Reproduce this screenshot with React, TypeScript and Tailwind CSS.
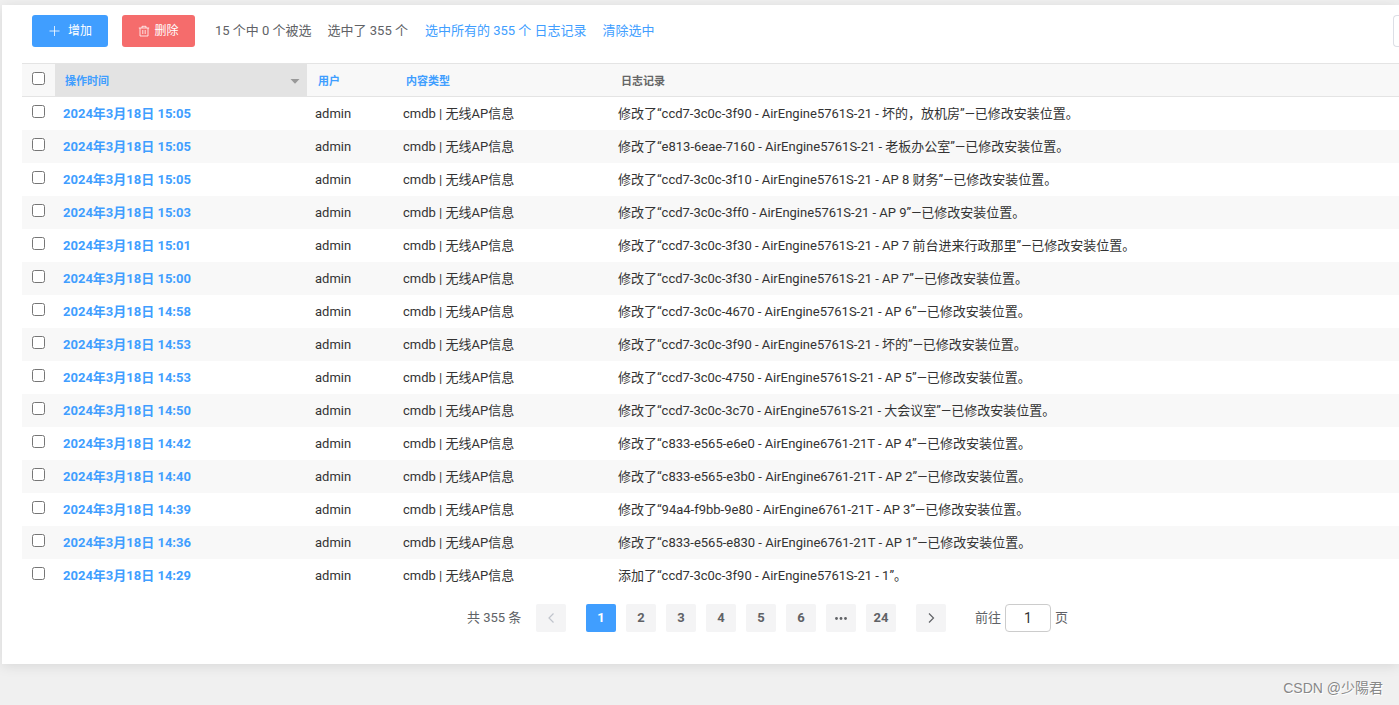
import React from "react";

type LogRow = { time: string; message: string };

const rows: LogRow[] = [
  { time: "15:05", message: "修改了“ccd7-3c0c-3f90 - AirEngine5761S-21 - 坏的，放机房”—已修改安装位置。" },
  { time: "15:05", message: "修改了“e813-6eae-7160 - AirEngine5761S-21 - 老板办公室”—已修改安装位置。" },
  { time: "15:05", message: "修改了“ccd7-3c0c-3f10 - AirEngine5761S-21 - AP 8 财务”—已修改安装位置。" },
  { time: "15:03", message: "修改了“ccd7-3c0c-3ff0 - AirEngine5761S-21 - AP 9”—已修改安装位置。" },
  { time: "15:01", message: "修改了“ccd7-3c0c-3f30 - AirEngine5761S-21 - AP 7 前台进来行政那里”—已修改安装位置。" },
  { time: "15:00", message: "修改了“ccd7-3c0c-3f30 - AirEngine5761S-21 - AP 7”—已修改安装位置。" },
  { time: "14:58", message: "修改了“ccd7-3c0c-4670 - AirEngine5761S-21 - AP 6”—已修改安装位置。" },
  { time: "14:53", message: "修改了“ccd7-3c0c-3f90 - AirEngine5761S-21 - 坏的”—已修改安装位置。" },
  { time: "14:53", message: "修改了“ccd7-3c0c-4750 - AirEngine5761S-21 - AP 5”—已修改安装位置。" },
  { time: "14:50", message: "修改了“ccd7-3c0c-3c70 - AirEngine5761S-21 - 大会议室”—已修改安装位置。" },
  { time: "14:42", message: "修改了“c833-e565-e6e0 - AirEngine6761-21T - AP 4”—已修改安装位置。" },
  { time: "14:40", message: "修改了“c833-e565-e3b0 - AirEngine6761-21T - AP 2”—已修改安装位置。" },
  { time: "14:39", message: "修改了“94a4-f9bb-9e80 - AirEngine6761-21T - AP 3”—已修改安装位置。" },
  { time: "14:36", message: "修改了“c833-e565-e830 - AirEngine6761-21T - AP 1”—已修改安装位置。" },
  { time: "14:29", message: "添加了“ccd7-3c0c-3f90 - AirEngine5761S-21 - 1”。" },
];

const pages = ["1", "2", "3", "4", "5", "6", "more", "24"];

function Toolbar() {
  return (
    <div className="flex items-center pl-[10px] text-[13px] text-[#606266]">
      <button type="button" className="flex h-8 w-[76px] items-center justify-center gap-2 rounded-[3px] bg-[#409eff] text-xs text-white">
        <svg className="size-3" viewBox="0 0 12 12" fill="none" stroke="currentColor" strokeWidth="0.8" aria-hidden="true">
          <path d="M6.500 1v10M1.500 6h10" />
        </svg>
        增加
      </button>
      <button type="button" className="ml-[14px] flex h-8 w-[73px] items-center justify-center gap-1 rounded-[3px] bg-[#f56c6c] text-xs text-white">
        <svg className="size-3" viewBox="0 0 12 12" fill="none" stroke="currentColor" strokeWidth="0.8" aria-hidden="true">
          <path d="M0.800 3h10.400M4 3V1.300h4V3M2 3v8h8V3M4.800 5v4M7.200 5v4" />
        </svg>
        删除
      </button>
      <span className="ml-5">15 个中 0 个被选</span>
      <span className="ml-4">选中了 355 个</span>
      <a href="#all" className="ml-[17px] text-[#409eff]">选中所有的 355 个 日志记录</a>
      <a href="#clear" className="ml-4 text-[#409eff]">清除选中</a>
      <input
        type="text"
        aria-label="搜索"
        className="ml-auto h-8 w-[6px] rounded-l-[4px] border border-r-0 border-[#dcdfe6] bg-white"
      />
    </div>
  );
}

function LogTable() {
  return (
    <table className="mt-4 w-full table-fixed border-separate border-spacing-0 text-left text-[13px] text-[#333]">
      <colgroup>
        <col className="w-[33px]" />
        <col className="w-[252px]" />
        <col className="w-[88px]" />
        <col className="w-[215px]" />
        <col />
      </colgroup>
      <thead>
        <tr className="h-[34px] bg-[#f8f8f8] text-[11px]">
          <th className="border-y border-[#e4e4e4] p-0 align-top">
            <input type="checkbox" aria-label="全选" className="mt-2 ml-[10px] block size-[13px]" />
          </th>
          <th className="border-y border-[#e4e4e4] bg-[#e3e3e3] px-[10px] pt-1 pb-0">
            <div className="flex items-center justify-between">
              <a href="#time" className="text-[#409eff]">操作时间</a>
              <svg className="-mr-1 h-2 w-3" viewBox="0 0 12 8" fill="#999" aria-hidden="true">
                <path d="M1.500 1h9L6 5.800z" />
              </svg>
            </div>
          </th>
          <th className="border-y border-[#e4e4e4] px-[11px] pt-1 pb-0"><a href="#user" className="text-[#409eff]">用户</a></th>
          <th className="border-y border-[#e4e4e4] px-[11px] pt-1 pb-0"><a href="#type" className="text-[#409eff]">内容类型</a></th>
          <th className="border-y border-[#e4e4e4] px-[11px] pt-1 pb-0 text-[#666]">日志记录</th>
        </tr>
      </thead>
      <tbody>
        {rows.map((row, i) => (
          <tr key={i} className="h-[33px] even:bg-[#f8f8f8]">
            <td className="p-0 align-top">
              <input type="checkbox" aria-label={row.message} className="mt-2 ml-[10px] block size-[13px]" />
            </td>
            <th className="px-2 py-0 font-bold">
              <a href={`#log-${i}`} className="text-[#409eff]">2024年3月18日 {row.time}</a>
            </th>
            <td className="px-2 py-0">admin</td>
            <td className="px-2 py-0">cmdb | 无线AP信息</td>
            <td className="px-2 py-0 whitespace-nowrap">{row.message}</td>
          </tr>
        ))}
      </tbody>
    </table>
  );
}

function Pagination() {
  return (
    <nav aria-label="分页" className="mt-3 flex h-7 items-center pl-[445px] text-[13px] text-[#606266]">
      <span className="w-[69px]">共 355 条</span>
      <button type="button" disabled aria-label="上一页" className="flex h-7 w-[30px] items-center justify-center rounded-[2px] bg-[#f4f4f5] text-[#c0c4cc]">
        <svg className="size-3" viewBox="0 0 12 12" fill="none" stroke="currentColor" strokeWidth="1.2" aria-hidden="true">
          <path d="M8.500 1.500 4 6l4.500 4.500" />
        </svg>
      </button>
      <ul className="mx-5 flex gap-[10px] font-bold">
        {pages.map((page) => (
          <li key={page}>
            <button
              type="button"
              aria-label={page === "more" ? "更多" : undefined}
              className={
                page === "1"
                  ? "flex h-7 w-[30px] items-center justify-center rounded-[2px] bg-[#409eff] text-white"
                  : "flex h-7 w-[30px] items-center justify-center rounded-[2px] bg-[#f4f4f5]"
              }
            >
              {page === "more" ? (
                <svg className="size-3" viewBox="0 0 12 12" fill="currentColor" aria-hidden="true">
                  <circle cx="1.500" cy="6.500" r="1.400" />
                  <circle cx="6" cy="6.500" r="1.400" />
                  <circle cx="10.500" cy="6.500" r="1.400" />
                </svg>
              ) : (
                page
              )}
            </button>
          </li>
        ))}
      </ul>
      <button type="button" aria-label="下一页" className="flex h-7 w-[30px] items-center justify-center rounded-[2px] bg-[#f4f4f5]">
        <svg className="size-3" viewBox="0 0 12 12" fill="none" stroke="currentColor" strokeWidth="1.2" aria-hidden="true">
          <path d="M4 1.500 8.500 6 4 10.500" />
        </svg>
      </button>
      <label className="ml-[29px] flex items-center gap-1">
        前往
        <input
          type="text"
          defaultValue="1"
          className="h-7 w-[46px] rounded-[4px] border border-[#ccc] bg-white text-center text-sm text-[#333]"
        />
        <span>页</span>
      </label>
    </nav>
  );
}

export default function App() {
  return (
    <div className="flex min-h-screen flex-col overflow-hidden bg-[#f0f0f0] pt-[5px] pl-[2px] font-['Roboto','Noto_Sans_CJK_SC',sans-serif]">
      <main className="bg-white pt-[10px] pb-8 pl-5 shadow-[0_2px_12px_rgba(0,0,0,0.1)]">
        <Toolbar />
        <LogTable />
        <Pagination />
      </main>
      <footer className="mt-[14px] pr-4 text-right font-['Liberation_Sans','Noto_Sans_CJK_SC',sans-serif] text-sm text-[#888] [text-shadow:1px_1px_0_#fff]">
        CSDN @少陽君
      </footer>
    </div>
  );
}
